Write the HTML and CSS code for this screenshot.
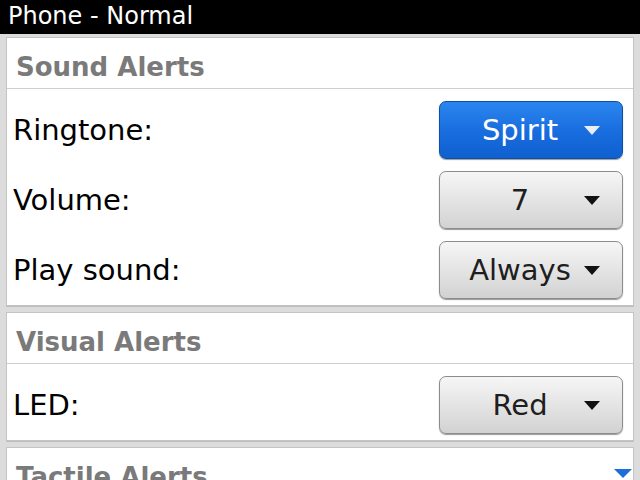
FILE: index.html
```html
<!DOCTYPE html>
<html lang="en">
<head>
    <meta charset="UTF-8">
    <meta name="viewport" content="width=device-width, initial-scale=1.0">
    <title>Phone - Normal</title>
    <link rel="stylesheet" href="styles.css">
</head>
<body>
    <div class="titlebar">Phone - Normal</div>
    <div class="screen">
        <div class="panel">
            <div class="panel-title">Sound Alerts</div>
            <div class="rows">
                <div class="row">
                    <span class="label">Ringtone:</span>
                    <button class="choice focused"><span class="value">Spirit</span><span class="arrow"></span></button>
                </div>
                <div class="row">
                    <span class="label">Volume:</span>
                    <button class="choice"><span class="value">7</span><span class="arrow"></span></button>
                </div>
                <div class="row">
                    <span class="label">Play sound:</span>
                    <button class="choice"><span class="value">Always</span><span class="arrow"></span></button>
                </div>
            </div>
        </div>
        <div class="panel">
            <div class="panel-title">Visual Alerts</div>
            <div class="rows">
                <div class="row">
                    <span class="label">LED:</span>
                    <button class="choice"><span class="value">Red</span><span class="arrow"></span></button>
                </div>
            </div>
        </div>
        <div class="panel">
            <div class="panel-title">Tactile Alerts</div>
        </div>
    </div>
    <div class="more"></div>
</body>
</html>
```
FILE: styles.css
```css
body {
    margin: 0;
    width: 640px;
    height: 480px;
    overflow: hidden;
    position: relative;
    background: #dcdcdc;
    font-family: "DejaVu Sans", sans-serif;
    color: #000;
}

.titlebar {
    height: 34px;
    background: #000;
    color: #fff;
    font-size: 24px;
    line-height: 32px;
    padding-left: 8px;
}

.screen {
    height: 443px;
    overflow: hidden;
    display: flex;
    flex-direction: column;
    gap: 6px;
    padding: 3px 6px 0 6px;
}

.panel {
    flex: none;
    background: #fff;
    border: 1px solid #c4c4c4;
    box-shadow: 0 1px 0 #bdbdbd;
}

.panel-title {
    height: 50px;
    line-height: 58px;
    padding-left: 9px;
    font-size: 26px;
    font-weight: bold;
    color: #7a7a7a;
    border-bottom: 1px solid #cfcfcf;
}

.rows {
    padding: 6px 0 0 0;
}

.row {
    height: 70px;
    display: flex;
    align-items: center;
    justify-content: space-between;
    padding: 0 10px 0 6px;
}

.label {
    font-size: 29px;
}

.choice {
    width: 184px;
    height: 58px;
    display: flex;
    align-items: center;
    padding: 0 22px 0 0;
    font-family: inherit;
    font-size: 29px;
    color: #1e1e1e;
    border: 1px solid #8c8c8c;
    border-radius: 7px;
    background: linear-gradient(#f6f6f6, #e6e6e6 45%, #d2d2d2);
    box-shadow: 0 1px 1px #9a9a9a;
}

.choice .value {
    flex: 1;
    text-align: center;
    padding-left: 16px;
}

.choice .arrow {
    width: 0;
    height: 0;
    border-left: 8px solid transparent;
    border-right: 8px solid transparent;
    border-top: 9px solid #111;
}

.choice.focused {
    color: #fff;
    border-color: #0c4ea8;
    background: linear-gradient(#2a86ee, #1a6ee0 50%, #0f60cf);
}

.choice.focused .arrow {
    border-top-color: #e8eefa;
}

.more {
    position: absolute;
    right: 8px;
    bottom: 2px;
    width: 0;
    height: 0;
    border-left: 9px solid transparent;
    border-right: 9px solid transparent;
    border-top: 9px solid #1c6fd8;
}
```
